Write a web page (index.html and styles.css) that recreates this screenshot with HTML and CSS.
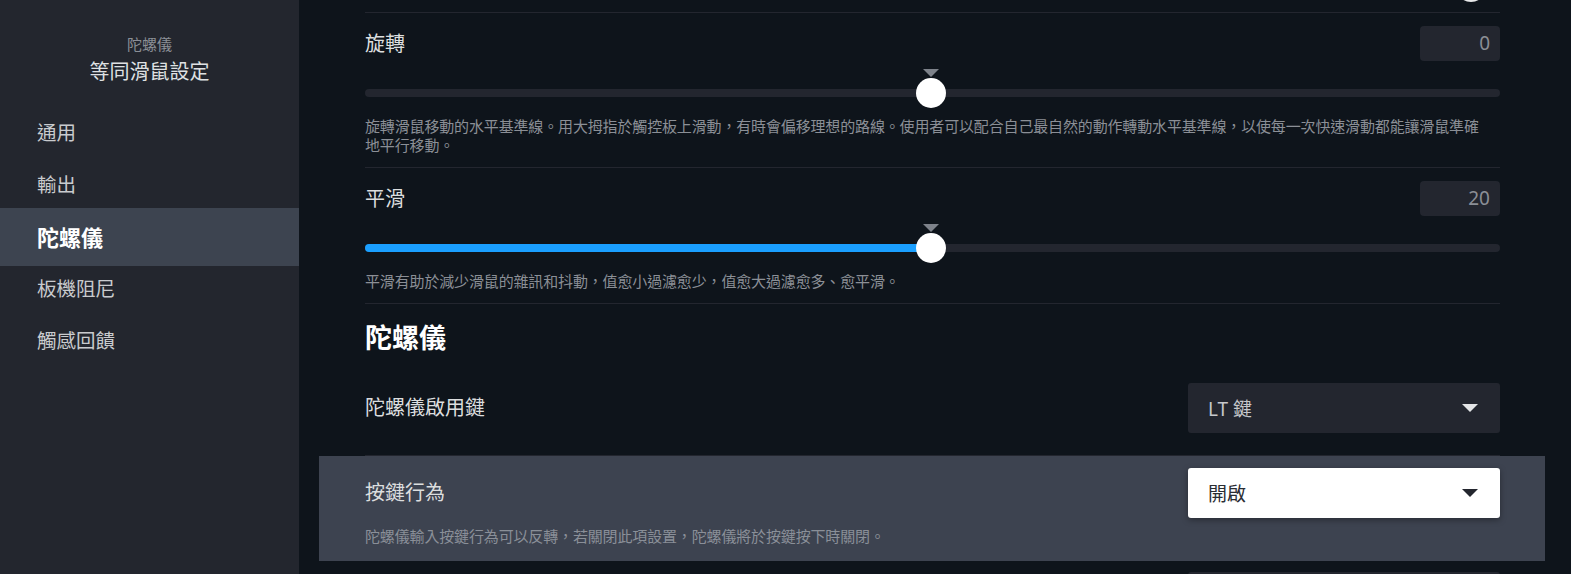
FILE: index.html
```html
<!DOCTYPE html>
<html>
<head>
	<meta charset="utf-8">
	<title>等同滑鼠設定</title>
	<link rel="stylesheet" href="styles.css">
</head>
<body>
<div class="sidebar">
	<div class="side-head">
		<div class="side-sub">陀螺儀</div>
		<div class="side-title">等同滑鼠設定</div>
	</div>
	<ul class="nav">
		<li>通用</li>
		<li>輸出</li>
		<li class="active">陀螺儀</li>
		<li>板機阻尼</li>
		<li>觸感回饋</li>
	</ul>
</div>

<div class="main">
	<div class="row">
		<div class="inner prev"><span class="toggle"></span></div>
	</div>

	<div class="row">
		<div class="inner field">
			<div class="field-top">
				<span class="label">旋轉</span>
				<span class="num">0</span>
			</div>
			<div class="slider">
				<div class="track"><div class="fill" style="width:0%"></div></div>
				<span class="mark" style="left:50%"></span>
				<span class="thumb" style="left:50%"></span>
			</div>
			<p class="desc">旋轉滑鼠移動的水平基準線。用大拇指於觸控板上滑動，有時會偏移理想的路線。使用者可以配合自己最自然的動作轉動水平基準線，以使每一次快速滑動都能讓滑鼠準確地平行移動。</p>
		</div>
	</div>

	<div class="row">
		<div class="inner field">
			<div class="field-top">
				<span class="label">平滑</span>
				<span class="num">20</span>
			</div>
			<div class="slider">
				<div class="track"><div class="fill" style="width:50%"></div></div>
				<span class="mark" style="left:50%"></span>
				<span class="thumb" style="left:50%"></span>
			</div>
			<p class="desc">平滑有助於減少滑鼠的雜訊和抖動，值愈小過濾愈少，值愈大過濾愈多、愈平滑。</p>
		</div>
	</div>

	<div class="row">
		<h2 class="section">陀螺儀</h2>
	</div>

	<div class="row">
		<div class="inner select-row">
			<span class="label">陀螺儀啟用鍵</span>
			<div class="dropdown">LT 鍵<span class="caret"></span></div>
		</div>
	</div>

	<div class="row hl">
		<div class="inner last">
			<div class="select-row">
				<span class="label">按鍵行為</span>
				<div class="dropdown light">開啟<span class="caret"></span></div>
			</div>
			<p class="desc">陀螺儀輸入按鍵行為可以反轉，若關閉此項設置，陀螺儀將於按鍵按下時關閉。</p>
		</div>
	</div>

	<div class="row">
		<div class="inner next"><div class="dropdown"></div></div>
	</div>
</div>
</body>
</html>
```

FILE: styles.css
```css
body {
	margin: 0;
	height: 574px;
	display: flex;
	overflow: hidden;
	background: #0e141b;
	font-family: "Noto Sans", "Noto Sans CJK TC", sans-serif;
	color: #dcdedf;
}

:root {
	--line: #23262f;
	--muted: #8b8f96;
}

/* sidebar */
.sidebar {
	width: 299px;
	flex-shrink: 0;
	background: #23262e;
}
.side-head {
	padding-top: 34px;
	text-align: center;
}
.side-sub {
	font-size: 15px;
	line-height: 20px;
	color: var(--muted);
}
.side-title {
	margin-top: 4px;
	font-size: 20px;
	line-height: 28px;
	color: #dfe1e3;
}
.nav {
	list-style: none;
	margin: 21px 0 0;
	padding: 0;
}
.nav li {
	height: 52px;
	line-height: 52px;
	padding-left: 37px;
	font-size: 19.5px;
	color: #c9cbce;
}
.nav li.active {
	height: 58px;
	line-height: 58px;
	margin: -3px 0;
	background: #3d4450;
	color: #fff;
	font-size: 22px;
	font-weight: bold;
}

/* main column */
.main {
	flex: 1;
	padding: 0 26px 0 20px;
	overflow: hidden;
}
.row {
	padding: 0 45px 0 46px;
}
.row.hl {
	background: #3d4350;
}
.inner {
	border-bottom: 1px solid var(--line);
}
.inner.last,
.inner.next {
	border-bottom: 0;
}

.prev {
	height: 12px;
	display: flex;
	justify-content: flex-end;
	overflow: hidden;
}
.toggle {
	width: 30px;
	height: 30px;
	margin: -28px 14px 0 0;
	border-radius: 15px;
	background: #e8e9ea;
}

.field {
	padding: 13px 0 12px;
}
.field-top {
	display: flex;
	justify-content: space-between;
	align-items: center;
}
.label {
	font-size: 20px;
	line-height: 28px;
	color: #dcdedf;
}
.num {
	width: 80px;
	height: 35px;
	box-sizing: border-box;
	padding-right: 10px;
	border-radius: 4px;
	background: var(--line);
	color: var(--muted);
	font-size: 19px;
	line-height: 35px;
	text-align: right;
}

.slider {
	position: relative;
	height: 32px;
	margin-top: 16px;
}
.track {
	position: relative;
	top: 12px;
	height: 8px;
	border-radius: 4px;
	background: var(--line);
	overflow: hidden;
}
.fill {
	height: 100%;
	background: #1a9fff;
}
.thumb {
	position: absolute;
	top: 1px;
	width: 30px;
	height: 30px;
	margin-left: -17px;
	border-radius: 50%;
	background: #fff;
}
.mark {
	position: absolute;
	top: -8px;
	margin-left: -10px;
	border-left: 8px solid transparent;
	border-right: 8px solid transparent;
	border-top: 8px solid #7d828a;
}

.desc {
	margin: 8px 0 0;
	padding-right: 20px;
	font-size: 15px;
	letter-spacing: -0.15px;
	line-height: 19px;
	color: var(--muted);
}
.hl .desc {
	margin-top: 9px;
	color: #8a8f98;
}

.section {
	margin: 0;
	padding: 16px 0 5px;
	font-size: 27px;
	line-height: 36px;
	font-weight: bold;
	color: #fff;
}

.select-row {
	display: flex;
	justify-content: space-between;
	align-items: center;
}
.inner.select-row {
	padding: 22px 0;
}
.inner.last {
	padding: 12px 0 15px;
}
.dropdown {
	width: 312px;
	height: 50px;
	box-sizing: border-box;
	padding: 0 22px 0 20px;
	display: flex;
	align-items: center;
	justify-content: space-between;
	border-radius: 3px;
	background: var(--line);
	color: #c6c8cc;
	font-size: 19px;
}
.caret {
	border-left: 8px solid transparent;
	border-right: 8px solid transparent;
	border-top: 8px solid #e4e5e7;
}
.dropdown.light {
	background: #fff;
	color: #2a2d33;
	box-shadow: 0 2px 6px rgba(0, 0, 0, 0.35);
}
.dropdown.light .caret {
	border-top-color: #23262e;
}
.next {
	display: flex;
	justify-content: flex-end;
	padding-top: 11px;
}
```
